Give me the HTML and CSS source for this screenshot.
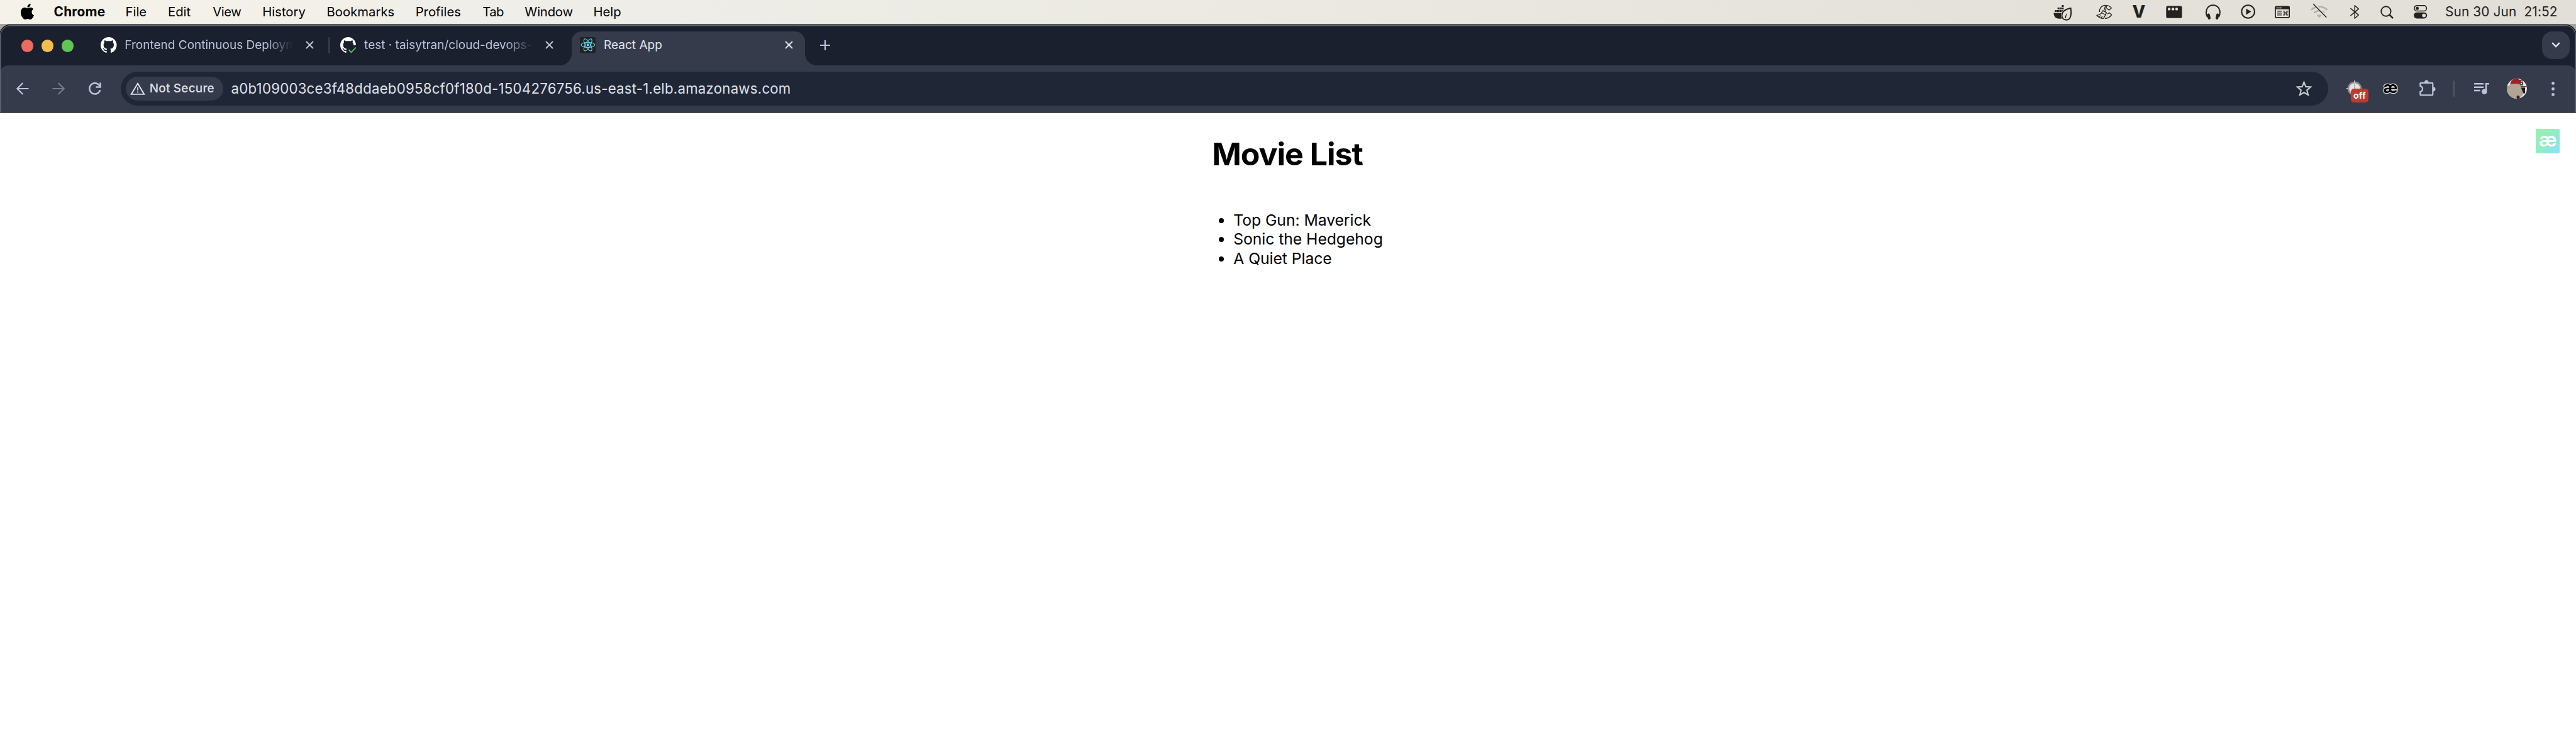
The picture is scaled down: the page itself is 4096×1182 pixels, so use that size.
FILE: index.html
```html
<!DOCTYPE html>
<html lang="en">
<head>
<meta charset="utf-8">
<title>React App</title>
<link rel="stylesheet" href="styles.css">
</head>
<body>
<header class="menubar">
  <svg class="apple" viewBox="2.3 0 19.5 24" preserveAspectRatio="none"><path d="M12.152 6.896c-.948 0-2.415-1.078-3.96-1.04-2.04.027-3.91 1.183-4.961 3.014-2.117 3.675-.546 9.103 1.519 12.09 1.013 1.454 2.208 3.09 3.792 3.039 1.52-.065 2.09-.987 3.935-.987 1.831 0 2.35.987 3.96.948 1.637-.026 2.676-1.48 3.676-2.948 1.156-1.688 1.636-3.325 1.662-3.415-.039-.013-3.182-1.221-3.22-4.857-.026-3.04 2.48-4.494 2.597-4.559-1.429-2.09-3.623-2.324-4.39-2.376-2-.156-3.675 1.09-4.61 1.09zM15.53 3.83c.843-1.012 1.4-2.427 1.245-3.83-1.207.052-2.662.805-3.532 1.818-.78.896-1.454 2.338-1.273 3.714 1.338.104 2.715-.688 3.559-1.701"/></svg>
  <nav class="menus">
    <b class="menu app-name">Chrome</b>
    <span class="menu w-file">File</span>
    <span class="menu w-edit">Edit</span>
    <span class="menu w-view">View</span>
    <span class="menu w-history">History</span>
    <span class="menu w-bookmarks">Bookmarks</span>
    <span class="menu w-profiles">Profiles</span>
    <span class="menu w-tab">Tab</span>
    <span class="menu w-window">Window</span>
    <span class="menu">Help</span>
  </nav>
  <div class="status">
    <svg class="s-docker" width="30" height="38" viewBox="0 0 30 38"><path d="M13.400 8h3v3h-3zM6.600 12h3v3h-3zM10 12h3v3h-3zM13.400 12h3v3h-3zM2.400 16h3v3h-3zM5.900 16h3v3h-3zM9.400 16h3v3h-3zM12.900 16h2.300l-1.500 3h-.8zM.5 20.500h12.200c-1.200 3.500-.8 6.500.6 9.200H9C3.500 29.700.5 26 .5 20.500z"/><path d="M27.700 13C18 14.800 13.600 18.800 13.600 24.500c0 4.700 3 7.200 7 7.200 7.500 0 8.200-9 7.100-18.700z" fill="none" stroke="#222220" stroke-width="1.900"/><path d="M18.700 29c-.5-2.600.8-6.200 3.600-8.200-1.300 2.600-2.200 5-2.300 8.200z"/></svg>
    <svg class="s-brush" width="26" height="38" viewBox="0 0 26 38" fill="none" stroke="#222220" stroke-width="1.300" stroke-linejoin="round"><path d="M5.300 19C5 12.500 9.500 8.300 15 8.300c3.800 0 6.800 1.300 9.400 4.500l-4 3.300c-1.200-1.500-2.300-2.200-3.700-2.400M17.500 22.300c1.300-.4 2.300-1.100 3.200-2l4 3.200c-2.800 3.700-6.200 5.800-10.700 5.800"/><path d="M14.900 9.300l-2.900 8.300 2.400 1.100 2.300-8.700M10.200 17l6.300 3-1.500 3.500-6.300-3zM8.800 20.600C6.300 23.300 3.800 24.100.9 24.300c2.700 3.300 6.500 5 10.800 5l3.300-5.700M4.600 26.700l2.700-2M8 28.400l1.900-2.400"/></svg>
    <span class="s-v">V</span>
    <svg class="s-window" width="26" height="38" viewBox="0 0 26 38"><path fill-rule="evenodd" d="M2.800 9.600h20.200a2.500 2.500 0 0 1 2.500 2.500v14.200a2.500 2.500 0 0 1-2.500 2.500H2.800a2.500 2.500 0 0 1-2.500-2.500V12.100a2.500 2.500 0 0 1 2.500-2.500zM5.100 12.200a2.200 2.200 0 1 0 0 4.400 2.200 2.200 0 0 0 0-4.400zM11.100 12.200a2.200 2.200 0 1 0 0 4.400 2.200 2.200 0 0 0 0-4.400zM17 12.200a2.200 2.200 0 1 0 0 4.400 2.200 2.200 0 0 0 0-4.400z"/></svg>
    <svg class="s-phones" width="24" height="38" viewBox="0 0 24 38"><path d="M2.900 27C.2 22.500.4 16.500 3 12.700 5.200 9.700 8.400 8.300 11.900 8.300s6.700 1.400 8.900 4.400c2.600 3.800 2.800 9.800.1 14.300" fill="none" stroke="#222220" stroke-width="2"/><rect x="3" y="21.400" width="4.400" height="9.600" rx="2.200" transform="rotate(-12 5.200 26.200)"/><rect x="16.400" y="21.400" width="4.400" height="9.600" rx="2.200" transform="rotate(12 18.600 26.200)"/></svg>
    <svg class="s-play" width="24" height="38" viewBox="0 0 24 38"><circle cx="11.600" cy="18.500" r="10.300" fill="none" stroke="#222220" stroke-width="2"/><path d="M8.500 13.700v9.700l8-4.850z"/></svg>
    <svg class="s-cmd" width="24" height="38" viewBox="0 0 24 38"><rect x=".9" y="10.500" width="22.300" height="17.400" rx="2" fill="none" stroke="#222220" stroke-width="1.800"/><path d="M1 10h22.300v4.700H1z"/><path d="M4 17.900h7M4 20.900h7M4 23.900h7" stroke="#222220" stroke-width="1.300"/><g fill="#e4e1da"><circle cx="3.700" cy="12.400" r="1"/><circle cx="6.700" cy="12.400" r="1"/><circle cx="9.700" cy="12.400" r="1"/></g><path d="M15.900 19.600h2.500v2.500h-2.500zM15.900 19.600h-1.100a1.200 1.200 0 1 1 1.100-1.200zM18.400 19.600h1.100a1.200 1.200 0 1 0-1.100-1.200zM15.900 22.100h-1.100a1.200 1.200 0 1 0 1.100 1.200zM18.400 22.100h1.100a1.200 1.200 0 1 1-1.100 1.200z" fill="none" stroke="#222220" stroke-width=".9"/></svg>
    <svg class="s-wifi" width="28" height="38" viewBox="0 0 28 38" fill="none"><path d="M1 15.700a18.500 18.500 0 0 1 25.600 0M5.600 20.400a12 12 0 0 1 16.500 0" stroke="#b5b3ad" stroke-width="2.800"/><path d="M9.800 24.500a6 6 0 0 1 8 0l-4 3.700z" fill="#b5b3ad"/><path d="M5.600 6.300l19.700 20.800" stroke="#e2dfd8" stroke-width="3.600"/><path d="M4.500 6.500l20.300 20.800" stroke="#222220" stroke-width="1.500" stroke-linecap="round"/></svg>
    <svg class="s-bt" width="15" height="38" viewBox="0 0 15 38"><path d="M.9 13.600l12.400 10.200-6.100 5.400V8.700l6.100 5.400L.9 24.600" fill="none" stroke="#222220" stroke-width="1.500" stroke-linejoin="round" stroke-linecap="round"/></svg>
    <svg class="s-search" width="22" height="38" viewBox="0 0 22 38" fill="none" stroke="#222220"><circle cx="8.900" cy="18" r="7.700" stroke-width="1.900"/><path d="M14.300 23.400l5 5" stroke-width="2.600" stroke-linecap="round"/></svg>
    <svg class="s-control" width="22" height="38" viewBox="0 0 22 38"><rect x=".9" y="8.900" width="19.500" height="8.600" rx="4.300" fill="none" stroke="#222220" stroke-width="1.600"/><circle cx="5.500" cy="13.200" r="2.500"/><rect x=".1" y="19.800" width="21.100" height="9.600" rx="4.800"/><circle cx="16.200" cy="24.600" r="2.900" fill="#e2dfd8"/></svg>
    <span class="clock">Sun 30 Jun&nbsp; 21:52</span>
  </div>
</header>
<div class="window">
  <div class="tabstrip">
    <div class="lights"><i class="red"></i><i class="yellow"></i><i class="green"></i></div>
    <div class="tab first">
      <svg class="favicon" viewBox="0 0 16 16"><path fill="#fff" d="M8 0C3.580 0 0 3.580 0 8c0 3.540 2.290 6.530 5.470 7.590.4.070.55-.17.55-.38 0-.19-.01-.82-.01-1.490-2.010.37-2.530-.49-2.690-.94-.09-.23-.48-.94-.82-1.130-.28-.15-.68-.52-.01-.53.63-.01 1.080.58 1.230.82.72 1.210 1.870.87 2.330.66.07-.52.28-.87.51-1.070-1.780-.2-3.640-.89-3.640-3.950 0-.87.31-1.590.82-2.150-.08-.2-.36-1.020.08-2.120 0 0 .67-.21 2.200.82.64-.18 1.320-.27 2-.27s1.360.09 2 .27c1.530-1.040 2.200-.82 2.200-.82.44 1.100.16 1.920.08 2.120.51.56.82 1.270.82 2.150 0 3.070-1.870 3.750-3.650 3.950.29.25.54.73.54 1.480 0 1.070-.01 1.930-.01 2.200 0 .21.15.46.55.38A8.010 8.010 0 0 0 16 8c0-4.420-3.580-8-8-8z"/></svg>
      <span class="title fade">Frontend Continuous Deploym</span>
      <svg class="close" viewBox="0 0 13 13"><path d="M1 1l11 11M12 1L1 12"/></svg>
    </div>
    <i class="tab-separator"></i>
    <div class="tab second">
      <svg class="favicon" viewBox="0 0 16 16"><path fill="#fff" d="M8 0C3.580 0 0 3.580 0 8c0 3.540 2.290 6.530 5.470 7.590.4.070.55-.17.55-.38 0-.19-.01-.82-.01-1.490-2.010.37-2.530-.49-2.690-.94-.09-.23-.48-.94-.82-1.130-.28-.15-.68-.52-.01-.53.63-.01 1.080.58 1.230.82.72 1.210 1.870.87 2.330.66.07-.52.28-.87.51-1.070-1.780-.2-3.640-.89-3.640-3.950 0-.87.31-1.590.82-2.150-.08-.2-.36-1.020.08-2.120 0 0 .67-.21 2.200.82.64-.18 1.320-.27 2-.27s1.360.09 2 .27c1.530-1.040 2.200-.82 2.200-.82.44 1.100.16 1.920.08 2.120.51.56.82 1.270.82 2.150L14 8.300 15.600 7.600A8 8 0 0 0 8 0z"/><path d="M8.500 12.600l2.400 2.600 4.700-4.900" fill="none" stroke="#5fd35f" stroke-width="1"/></svg>
      <span class="title fade">test · taisytran/cloud-devops-</span>
      <svg class="close" viewBox="0 0 13 13"><path d="M1 1l11 11M12 1L1 12"/></svg>
    </div>
    <div class="tab active">
      <svg class="favicon" viewBox="0 0 32 32"><rect width="32" height="32" rx="3.500" fill="#222"/><g fill="none" stroke="#61dafb" stroke-width="1.300"><ellipse cx="16" cy="15.500" rx="13.500" ry="5"/><ellipse cx="16" cy="15.500" rx="13.500" ry="5" transform="rotate(60 16 15.500)"/><ellipse cx="16" cy="15.500" rx="13.500" ry="5" transform="rotate(120 16 15.500)"/></g><circle cx="16" cy="15.500" r="2.600" fill="#61dafb"/></svg>
      <span class="title">React App</span>
      <svg class="close" viewBox="0 0 13 13"><path d="M1 1l11 11M12 1L1 12"/></svg>
    </div>
    <svg class="new-tab" viewBox="0 0 16 16"><path d="M8 0v16M0 8h16"/></svg>
    <div class="tab-search"><svg viewBox="0 0 14 9"><path d="M1.200 1.200L7 7l5.800-5.800"/></svg></div>
  </div>
  <div class="toolbar">
    <svg class="back" viewBox="0 0 20 20"><path d="M19.500 10H1.500M10.300 1L1.400 10l8.900 9"/></svg>
    <svg class="forward" viewBox="0 0 20 20"><path d="M.5 10h18M9.700 1l8.900 9-8.900 9"/></svg>
    <svg class="reload" viewBox="0 0 20 20"><path d="M18.200 12.200A8.600 8.600 0 1 1 16.400 4.200l2 2.300"/><path d="M18.600.4v7.100h-7.100"/></svg>
    <div class="omnibox">
      <div class="chip">
        <svg viewBox="0 0 24 20"><path d="M12 1.800L22.200 18.900H1.800z" fill="none" stroke="#e0e2ec" stroke-width="1.900"/><path d="M12 7.700v5.200M12 14.400v2" stroke="#e0e2ec" stroke-width="1.700"/></svg>
        <span>Not Secure</span>
      </div>
      <span class="url">a0b109003ce3f48ddaeb0958cf0f180d-1504276756.us-east-1.elb.amazonaws.com</span>
      <svg class="star" viewBox="0 0 27 26"><path d="M13.500 2.800l2.900 7.100 7.600.6-5.800 5 1.800 7.500-6.500-4-6.500 4 1.800-7.500-5.800-5 7.600-.6z" fill="none" stroke="#c7c8ce" stroke-width="2.200"/></svg>
    </div>
    <div class="ext-off">
      <svg viewBox="0 0 26 26"><circle cx="13" cy="13" r="10" fill="#e4e4e2" stroke="#8c8c8a" stroke-width="2.600"/><path d="M13 0v4M0 13h3" stroke="#ddd" stroke-width="1.400"/><path d="M13 5v8" stroke="#999" stroke-width="1.400"/></svg>
      <span class="badge">off</span>
    </div>
    <svg class="ext-ae" viewBox="0 0 28 24"><text x="14" y="18.800" text-anchor="middle">æ</text></svg>
    <svg class="puzzle" viewBox="0 0 26 26"><path d="M2.800 4.800H20.200Q21.300 4.800 21.300 5.900V23.200Q21.300 24.400 20.200 24.400H2.400Q1.300 24.400 1.300 23.200V18.900C6.200 17.800 6.200 11 1.300 9.900V5.900Q1.300 4.800 2.400 4.800z" fill="none" stroke="#bcc4dc" stroke-width="2.200" stroke-linejoin="round"/><path d="M8 4a3.300 3.600 0 0 1 6.600 0zM22 11.200a3.500 3.500 0 0 1 0 7z" fill="#bcc4dc"/></svg>
    <i class="bar-separator"></i>
    <svg class="queue" viewBox="0 0 24 18"><path d="M0 1.300h15M0 6.700h15M0 12h9.700M19 14V1.300h5" fill="none" stroke="#bcc4dc" stroke-width="2.500"/><circle cx="16.300" cy="13.800" r="4.100" fill="#bcc4dc"/></svg>
    <svg class="avatar" viewBox="0 0 32 32"><defs><clipPath id="face"><circle cx="16" cy="16" r="16"/></clipPath></defs><g clip-path="url(#face)"><path fill="#e2e2e6" d="M0 0h32v32H0z"/><path fill="#a58a5a" d="M0 12h3v6H0z"/><path fill="#5a4244" d="M20 2h6v9h-6z"/><path fill="#d9dbe4" d="M23 3.500h2v2h-2zM22 7h2v2h-2z"/><path fill="#6b4238" d="M21 12h11v1.300H21z"/><path fill="#a11f22" d="M5.500 9C6-1 19-2 20.500 3l.5 7-15 1z"/><path fill="#1d1a20" d="M22 14.300h7v9.200h-7z"/><path fill="#b0a494" d="M1 19C1 13 4 8.300 10 8.300h8c3 0 4 3 5 7l3.500 9L20 32H6C2 29 1 24 1 19z"/><path fill="#3c211c" d="M15.500 28.500l2-2 2.500 1.500 1 4h-5z"/></g></svg>
    <svg class="dots" viewBox="0 0 5 23"><circle cx="2.500" cy="2.500" r="2.400"/><circle cx="2.500" cy="11.500" r="2.400"/><circle cx="2.500" cy="20.400" r="2.400"/></svg>
  </div>
</div>
<main class="page">
  <h1>Movie List</h1>
  <ul>
    <li>Top Gun: Maverick</li>
    <li>Sonic the Hedgehog</li>
    <li>A Quiet Place</li>
  </ul>
  <svg class="ae-widget" viewBox="0 0 38 38"><text x="19" y="28" text-anchor="middle">æ</text></svg>
</main>
</body>
</html>
```
FILE: styles.css
```css
* { box-sizing: border-box; }
html, body { margin: 0; height: 100%; overflow: hidden; }
body { width: 4096px; height: 1182px; background: #fff; font-family: Inter, "Liberation Sans", sans-serif; display: flex; flex-direction: column; }
svg { display: block; flex: none; }
i { display: block; flex: none; }
b { font-weight: 700; }

/* System menu bar */
.menubar { height: 38.4px; flex: none; display: flex; align-items: center; padding-left: 32.5px; background: linear-gradient(90deg, #f5f2ea, #f3f0e9 12%, #efeee8 18%, #ebe9e2 50%, #e4e1da 80%, #e2dfd8); font-size: 20.3px; color: #000; }
.apple { width: 21px; height: 25px; margin-top: -2px; }
.menus { display: flex; margin-left: 32px; margin-top: -1px; line-height: 38px; white-space: nowrap; }
.menu { display: block; }
.app-name { width: 114px; font-size: 20.8px; letter-spacing: .25px; }
.w-file { width: 67.5px; }
.w-edit { width: 71.2px; }
.w-view { width: 79px; letter-spacing: -.4px; }
.w-history { width: 102.4px; }
.w-bookmarks { width: 141.1px; }
.w-profiles { width: 106.7px; }
.w-tab { width: 67px; letter-spacing: -.7px; }
.w-window { width: 109.1px; letter-spacing: -.2px; }
.status { margin-left: auto; width: 831px; display: flex; align-items: center; fill: #222220; color: #222220; }
.status svg { height: 38px; }
.s-brush { margin-left: 37.5px; }
.s-v { margin-left: 32px; width: 22px; font-size: 27px; font-weight: 800; line-height: 38px; }
.s-window { margin-left: 31.9px; }
.s-phones { margin-left: 36.5px; }
.s-play { margin-left: 32px; }
.s-cmd { margin-left: 30px; }
.s-wifi { margin-left: 33.2px; }
.s-bt { margin-left: 34.7px; }
.s-search { margin-left: 32.8px; }
.s-control { margin-left: 31px; }
.clock { margin-left: 28.4px; margin-top: -1px; font-size: 20.8px; letter-spacing: .15px; white-space: nowrap; line-height: 38px; }

/* Browser window */
.window { position: relative; flex: none; height: 139.6px; margin-top: 1.6px; border-radius: 16px 16px 0 0; background: #1a202e; box-shadow: 0 0 0 1px #000, 0 -2px 0 16px #a3a69c; clip-path: inset(-2px 0 0 0); }
.window::after { content: ""; position: absolute; inset: 0 0 -4px; border-radius: 16px 16px 0 0; box-shadow: inset 0 0 0 1.6px #5b6371; pointer-events: none; }
.tabstrip { height: 64px; display: flex; align-items: center; padding-left: 33.6px; font-size: 19px; color: #bcc4dc; }
.lights { display: flex; gap: 12.8px; }
.lights i { width: 19.2px; height: 19.2px; border-radius: 50%; margin-top: 2px; }
.red { background: #ec6a5e; }
.yellow { background: #f4be4f; }
.green { background: #61c554; }
.tab { display: flex; align-items: center; height: 54.4px; align-self: flex-end; padding-bottom: 10px; }
.first { margin-left: 27.2px; width: 377.6px; padding-left: 16px; }
.second { width: 384.2px; padding-left: 16px; }
.favicon { width: 25.6px; height: 25.6px; }
.title { margin-left: 12.8px; width: 268.8px; white-space: nowrap; line-height: 30px; }
.fade { -webkit-mask-image: linear-gradient(90deg, #000 225px, transparent 268px); mask-image: linear-gradient(90deg, #000 225px, transparent 268px); }
.close { width: 13px; height: 13px; margin-left: 19px; stroke: #bcc4dc; stroke-width: 2; }
.tab-separator { width: 3.2px; height: 25.6px; border-radius: 2px; background: #353b4b; }
.active { position: relative; width: 371px; padding-left: 12.8px; border-radius: 16px 16px 0 0; background: #353b4b; color: #e0e2ec; }
.active::before, .active::after { content: ""; position: absolute; bottom: 0; width: 19.2px; height: 19.2px; }
.active::before { right: 100%; background: radial-gradient(circle at 0 0, transparent 18.7px, #353b4b 19.4px); }
.active::after { left: 100%; background: radial-gradient(circle at 100% 0, transparent 18.7px, #353b4b 19.4px); }
.active .close { stroke: #e0e2ec; }
.new-tab { width: 16px; height: 16px; margin-left: 24px; stroke: #bcc4dc; stroke-width: 2.2; }
.tab-search { width: 44.8px; height: 44.8px; margin-left: auto; margin-right: 9.6px; border-radius: 16px; background: #353b4b; display: flex; align-items: center; justify-content: center; }
.tab-search svg { width: 14px; height: 9px; fill: none; stroke: #e0e2ec; stroke-width: 2.4; }

/* Toolbar */
.toolbar { height: 75.2px; display: flex; align-items: center; border-radius: 13px 13px 0 0; border-bottom: 1.6px solid #4a4a50; background: #353b4b; }
.back, .forward, .reload { width: 20px; height: 20px; fill: none; stroke: #bcc4dc; stroke-width: 2.2; }
.back { margin-left: 25.5px; }
.forward { margin-left: 37.5px; stroke: #757b8b; }
.reload { margin-left: 37.5px; stroke-width: 2.5; }
.omnibox { margin-left: 31.5px; width: 3510.4px; height: 54.4px; border-radius: 27.2px; background: #1f2636; display: flex; align-items: center; padding-left: 8px; color: #e0e2ec; }
.chip { width: 155.2px; height: 38.4px; border-radius: 19.2px; background: #353b4b; display: flex; align-items: center; padding-left: 7.2px; font-size: 18.9px; letter-spacing: .25px; font-weight: 500; white-space: nowrap; }
.chip svg { width: 24px; height: 20px; }
.chip span { margin-left: 6.5px; margin-top: -1.6px; }
.url { margin-left: 12.4px; margin-top: -1.2px; font-size: 22.2px; letter-spacing: .25px; white-space: nowrap; }
.star { width: 27px; height: 26px; margin-left: auto; margin-right: 25px; }
.ext-off { position: relative; margin-left: 28.5px; width: 26px; height: 26px; }
.ext-off svg { width: 26px; height: 26px; }
.badge { position: absolute; left: 6.7px; top: 12.6px; width: 28.5px; height: 22.4px; border-radius: 5px; background: #c93530; color: #fff; font-size: 14.3px; font-weight: 700; line-height: 22px; text-align: center; }
.ext-ae { width: 28px; height: 24px; margin-left: 30.5px; }
.ext-ae text { font-size: 25px; font-weight: 700; fill: #000; stroke: #d4d5d8; stroke-width: 2.6px; paint-order: stroke; stroke-linejoin: round; }
.puzzle { width: 26px; height: 26px; margin-left: 32px; margin-top: -3px; }
.bar-separator { width: 3.2px; height: 25.6px; border-radius: 2px; margin-left: 26.8px; background: #4c5264; }
.queue { width: 24px; height: 18px; margin-left: 30.4px; }
.avatar { width: 32px; height: 32px; margin-left: 28.6px; }
.dots { width: 5px; height: 23px; margin-left: 39px; fill: #bcc4dc; }

/* Page */
.page { position: relative; flex: 1; color: #000; }
h1 { margin: 33.7px 0 0; padding-right: 2px; text-align: center; font-size: 50px; line-height: 64px; font-weight: 700; letter-spacing: -1px; }
ul { width: fit-content; margin: 57.5px auto 0; padding-left: 64px; font-size: 24.7px; letter-spacing: -.04px; line-height: 30.4px; }
.ae-widget { position: absolute; right: 25.6px; top: 25.6px; width: 38.4px; height: 38.4px; border-radius: 2px; background: linear-gradient(135deg, #98f2a8, #90ecc8 55%, #8be0ff); }
.ae-widget text { font-size: 31px; font-weight: 600; fill: #fff; }
```
